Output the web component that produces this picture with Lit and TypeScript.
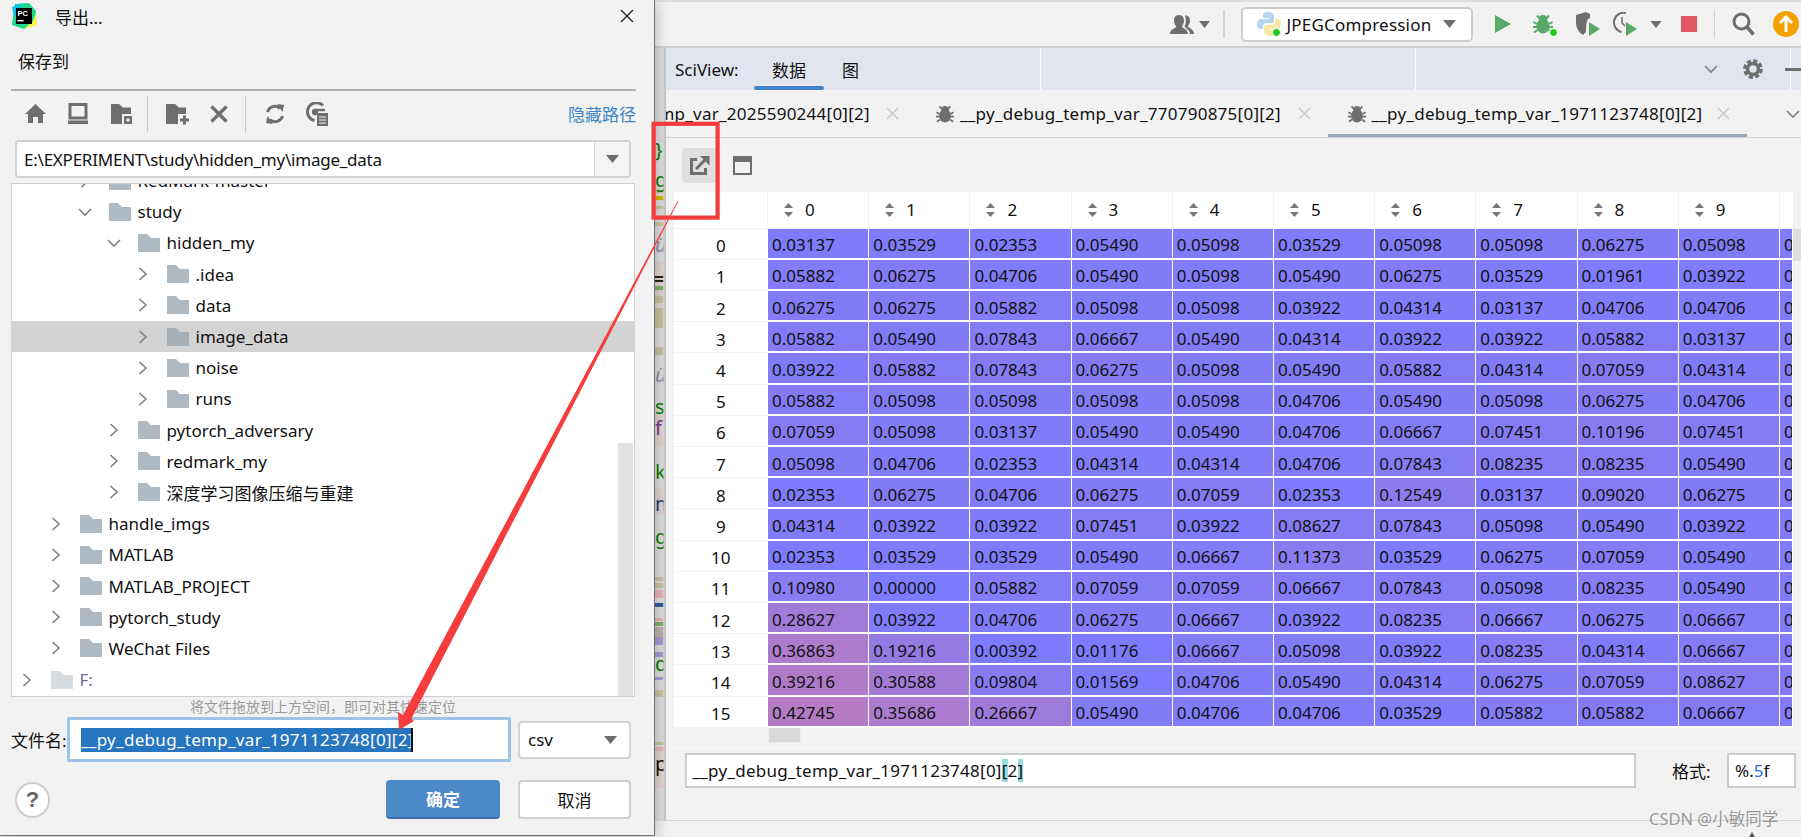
import { LitElement, html, css, svg } from "lit";
import { customElement } from "lit/decorators.js";

const TABLE: string[][] = [
"0.03137 0.03529 0.02353 0.05490 0.05098 0.03529 0.05098 0.05098 0.06275 0.05098",
"0.05882 0.06275 0.04706 0.05490 0.05098 0.05490 0.06275 0.03529 0.01961 0.03922",
"0.06275 0.06275 0.05882 0.05098 0.05098 0.03922 0.04314 0.03137 0.04706 0.04706",
"0.05882 0.05490 0.07843 0.06667 0.05490 0.04314 0.03922 0.03922 0.05882 0.03137",
"0.03922 0.05882 0.07843 0.06275 0.05098 0.05490 0.05882 0.04314 0.07059 0.04314",
"0.05882 0.05098 0.05098 0.05098 0.05098 0.04706 0.05490 0.05098 0.06275 0.04706",
"0.07059 0.05098 0.03137 0.05490 0.05490 0.04706 0.06667 0.07451 0.10196 0.07451",
"0.05098 0.04706 0.02353 0.04314 0.04314 0.04706 0.07843 0.08235 0.08235 0.05490",
"0.02353 0.06275 0.04706 0.06275 0.07059 0.02353 0.12549 0.03137 0.09020 0.06275",
"0.04314 0.03922 0.03922 0.07451 0.03922 0.08627 0.07843 0.05098 0.05490 0.03922",
"0.02353 0.03529 0.03529 0.05490 0.06667 0.11373 0.03529 0.06275 0.07059 0.05490",
"0.10980 0.00000 0.05882 0.07059 0.07059 0.06667 0.07843 0.05098 0.08235 0.05490",
"0.28627 0.03922 0.04706 0.06275 0.06667 0.03922 0.08235 0.06667 0.06275 0.06667",
"0.36863 0.19216 0.00392 0.01176 0.06667 0.05098 0.03922 0.08235 0.04314 0.06667",
"0.39216 0.30588 0.09804 0.01569 0.04706 0.05490 0.04314 0.06275 0.07059 0.08627",
"0.42745 0.35686 0.26667 0.05490 0.04706 0.04706 0.03529 0.05882 0.05882 0.06667",
].map((r) => r.split(" "));

const TREE: { name: string; level: number; open?: boolean; selected?: boolean; pale?: boolean }[] = [
  { name: "RedMark-master", level: 2 },
  { name: "study", level: 2, open: true },
  { name: "hidden_my", level: 3, open: true },
  { name: ".idea", level: 4 },
  { name: "data", level: 4 },
  { name: "image_data", level: 4, selected: true },
  { name: "noise", level: 4 },
  { name: "runs", level: 4 },
  { name: "pytorch_adversary", level: 3 },
  { name: "redmark_my", level: 3 },
  { name: "深度学习图像压缩与重建", level: 3 },
  { name: "handle_imgs", level: 1 },
  { name: "MATLAB", level: 1 },
  { name: "MATLAB_PROJECT", level: 1 },
  { name: "pytorch_study", level: 1 },
  { name: "WeChat Files", level: 1 },
  { name: "F:", level: 0, pale: true },
];

const STRIPES: [number, number, string][] = [
  [190, 193, "#c9c2a0"], [196, 200, "#d8b800"], [206, 209, "#c9c2a0"], [222, 226, "#c9c2a0"],
  [261, 320, "#e0d3d0"], [276, 278, "#222"], [280, 282, "#222"], [286, 290, "#7fb069"], [296, 303, "#c9c2a0"],
  [308, 328, "#c9c2a0"], [347, 355, "#c9c2a0"], [413, 447, "#e0d3d0"], [488, 515, "#e0d3d0"],
  [577, 581, "#c9c2a0"], [583, 588, "#c9c2a0"], [590, 598, "#e8b4b4"], [603, 607, "#2f5f9f"], [618, 621, "#e8b4b4"],
  [622, 626, "#7fb069"], [627, 637, "#c0b4ae"], [637, 645, "#a99ad8"], [652, 657, "#a99ad8"], [677, 680, "#a99ad8"],
  [690, 697, "#c9c2a0"], [742, 745, "#c9c2a0"], [747, 751, "#e8b4b4"], [751, 788, "#e0d3d0"],
];

const GLYPHS: [string, number, string, string?][] = [
  ["}", 157, "#0a7d0a"], ["g", 187, "#0a7d0a"], ["ü", 252, "#8a94a8", "italic"], ["ü", 382, "#8a94a8", "italic"],
  ["s", 414, "#0a7d0a"], ["f", 435, "#7a3a8a"], ["k", 479, "#0a7d0a"], ["m", 511, "#1f3f7a"], ["g", 544, "#0a7d0a"],
  ["d", 671, "#0a7d0a"], ["p", 771, "#111"],
];

const tri = (w = 13, h = 8, c = "#6e6e6e") => html`<svg class="ic" width=${w} height=${h} viewBox="0 0 13 8"><path d="M0 0H13L6.5 8Z" fill=${c}/></svg>`;
const folder = (c: string) => html`<svg class="ic" width="22" height="18" viewBox="0 0 22 18"><path d="M0 0H9L13 4H22V18H0Z" fill=${c}/></svg>`;
const chevR = html`<svg class="ic" width="16" height="14" viewBox="0 0 16 14"><path d="M4.5 1L11 7L4.5 13" fill="none" stroke="#808080" stroke-width="1.6"/></svg>`;
const chevD = html`<svg class="ic" width="16" height="14" viewBox="0 0 16 14"><path d="M2 4L8 10L14 4" fill="none" stroke="#808080" stroke-width="1.6"/></svg>`;
const closeX = (s: number, c: string, w = 1.5) => html`<svg class="ic" width=${s} height=${s} viewBox="0 0 14 14"><path d="M1 1L13 13M13 1L1 13" fill="none" stroke=${c} stroke-width=${w}/></svg>`;
const bug = (c: string, s = 20) => html`<svg class="ic" width=${s} height=${s} viewBox="0 0 20 20"><g fill=${c}><ellipse cx="10" cy="12" rx="6.6" ry="7.5"/><circle cx="10" cy="5" r="4"/></g><path d="M4 1.5L7 5M16 1.5L13 5M0.5 8L4 10M19.5 8L16 10M0 13H4M20 13H16M1 18.5L4.5 16M19 18.5L15.5 16" stroke=${c} stroke-width="2" fill="none"/></svg>`;
const sortIc = html`<svg class="ic" width="9" height="14" viewBox="0 0 9 14"><path d="M4.5 0L9 5H0ZM4.5 14L0 9H9Z" fill="#777"/></svg>`;

@customElement("app-root")
export class AppRoot extends LitElement {
  static styles = css`
    :host { display: block; width: 1801px; height: 837px; position: relative; overflow: hidden; background: #f2f2f2;
      font-family: "Noto Sans", "Noto Sans CJK SC", sans-serif; font-size: 17px; color: #111; }
    * { box-sizing: border-box; }
    .ic { display: block; flex: none; }
    .app { display: flex; width: 1801px; height: 837px; }

    .dialog { width: 655px; height: 836px; flex: none; background: #f2f2f2; border-right: 1.5px solid #707070; border-bottom: 1.5px solid #707070;
      box-shadow: 2px 2px 12px rgba(0,0,0,.22); position: relative; z-index: 2; display: flex; flex-direction: column; }
    .title { height: 32px; display: flex; align-items: center; padding: 0 20px 0 11px; }
    .title .name { margin-left: 18px; flex: 1; }
    .save { height: 57px; padding: 10px 0 0 18px; line-height: 40px; }
    .hr { height: 2px; background: #b0b0b0; margin: 0 18px 0 11px; flex: none; }
    .tools { height: 49px; display: flex; align-items: center; padding: 0 18px 4px 23px; flex: none; }
    .tools .btn { width: 24px; height: 24px; display: flex; align-items: center; justify-content: center; }
    .g19 { margin-left: 19px; } .g18 { margin-left: 18px; } .g17 { margin-left: 17px; } .g21 { margin-left: 21px; } .g12 { margin-left: 12px; }
    .vsep { width: 1px; height: 36px; background: #c8c8c8; margin-left: 14px; }
    .hide { margin-left: auto; color: #3d85c6; white-space: nowrap; }
    .combo { flex: none; height: 38px; margin: 0 23px 0 15px; border: 2px solid #d0d0d0; border-radius: 4px; background: #fff; display: flex; align-items: center; }
    .combo .val { flex: 1; padding-left: 7px; white-space: nowrap; letter-spacing: -0.23px; }
    .combo .drop { width: 35px; height: 100%; border-left: 1px solid #d8d8d8; background: #f4f4f4; display: flex; align-items: center; justify-content: center; }
    .tree { flex: none; height: 514px; margin: 5px 19px 0 11px; border: 1.5px solid #d0d0d0; background: #fff; overflow: hidden; position: relative; }
    .rows { margin-top: -19px; display: flex; flex-direction: column; }
    .row { height: 31.2px; flex: none; display: flex; align-items: center; white-space: nowrap; }
    .row.sel { background: #d3d3d3; }
    .row .fold { margin-left: 16px; margin-right: 6.5px; }
    .row.pale .t { color: #6a6aa8; }
    .thumb { position: absolute; right: 1px; top: 259px; bottom: 0; width: 15px; background: #e2e2e2; }
    .hint { height: 20px; flex: none; margin: 0 19px 0 11px; text-align: center; font-size: 14px; line-height: 20px; color: #9a9a9a; }
    .fileRow { display: flex; align-items: center; height: 45px; flex: none; padding-left: 11px; }
    .fileRow .lbl { width: 56px; flex: none; white-space: nowrap; }
    .fn { width: 444px; height: 45px; flex: none; border: 3px solid #9cc3ea; background: #fff; padding-left: 11px; display: flex; align-items: center; border-radius: 2px; }
    .seltext { height: 24px; line-height: 23px; background: #2675bf; color: #fff; border-right: 2px solid #111; white-space: nowrap; width: 332px; flex: none; overflow: hidden; letter-spacing: 0.3px; }
    .csv { width: 113px; height: 38px; margin-left: 7px; flex: none; border: 2px solid #d4d4d4; border-radius: 4px; background: #fff; display: flex; align-items: center; justify-content: space-between; padding: 0 12px 0 8px; }
    .btnRow { display: flex; align-items: center; height: 39px; margin-top: 18px; flex: none; padding-left: 15px; }
    .help { width: 35px; height: 36px; border-radius: 50%; border: 2px solid #cfcfcf; background: #fff; color: #666; font-weight: 700; font-size: 22px; display: flex; align-items: center; justify-content: center; font-family: "Liberation Sans", sans-serif; }
    .ok { width: 114px; height: 39px; margin-left: auto; border-radius: 4px; background: #4d88c9; border-bottom: 2px solid #3b70ad; color: #fff; font-weight: 700; display: flex; align-items: center; justify-content: center; }
    .cancel { width: 113px; height: 39px; margin: 0 23px 0 18px; border-radius: 4px; border: 2px solid #d0d0d0; background: #fff; display: flex; align-items: center; justify-content: center; }

    .ide { flex: 1; min-width: 0; display: flex; flex-direction: column; height: 837px; }
    .topbar { height: 48px; flex: none; background: #f2f2f2; border-top: 2px solid #dcdcdc; border-bottom: 2px solid #cfcfcf; display: flex; align-items: center; }
    .tsep { width: 1.5px; height: 28px; background: #d4d4d4; flex: none; }
    .run { width: 232px; height: 35px; flex: none; background: #fff; border: 2px solid #cdcdcd; border-radius: 5px; display: flex; align-items: center; padding-left: 14px; }
    .run .cfg { margin-left: 6px; flex: 1; white-space: nowrap; letter-spacing: 0.2px; }
    .run .ic:last-child { margin-right: 15px; }
    .m516 { margin-left: 515px; } .m5 { margin-left: 5px; } .m13 { margin-left: 13px; } .m16 { margin-left: 16px; } .m23 { margin-left: 23px; }
    .m22 { margin-left: 22px; } .m19 { margin-left: 19px; } .m12 { margin-left: 12px; } .m17 { margin-left: 17px; } .m18 { margin-left: 18px; }
    .dotwrap { position: relative; display: block; }
    .dot { position: absolute; right: -5px; bottom: -3px; }

    .body { flex: 1; min-height: 0; display: flex; }
    .gutter { width: 11px; height: 773px; flex: none; display: block; }
    .main { flex: 1; min-width: 0; height: 773px; display: flex; flex-direction: column; background: #f2f2f2; }
    .sci { height: 42px; flex: none; background: #e1e5ed; display: flex; position: relative; }
    .sec { width: 375px; flex: none; border-right: 1px solid #fff; display: flex; align-items: center; }
    .sec.first { padding-left: 9px; width: 375px; }
    .sec.last { justify-content: flex-end; padding-right: 27px; }
    .slabel { width: 79px; flex: none; white-space: nowrap; }
    .stab { height: 42px; padding: 0 18px; display: flex; align-items: center; position: relative; }
    .stab.on::after { content: ""; position: absolute; left: 0; right: 0; bottom: 0; height: 4px; background: #4083c9; border-radius: 3px; }
    .gear { margin-left: 24px; }
    .minus { position: absolute; right: 0; top: 20px; width: 16px; height: 3px; background: #6e6e6e; }
    .tabs { height: 48px; flex: none; display: flex; border-bottom: 1.5px solid #d4d4d4; overflow: hidden; position: relative; }
    .tab { flex: none; display: flex; align-items: center; padding: 0 17px 0 20px; height: 100%; position: relative; white-space: nowrap; }
    .tab.cut { margin-left: -171px; width: 421px; }
    .tab.wide { width: 411.5px; }
    .tab.last { width: 419.5px; }
    .tab.on::after { content: ""; position: absolute; left: 0; right: 0; bottom: 0; height: 3px; background: #9aa7b8; }
    .tab .t { margin-left: 6px; flex: 1; letter-spacing: 0.25px; }
    .tab .blank { width: 18px; flex: none; }
    .more { position: absolute; right: 0; top: 17px; }
    .tool { height: 54px; flex: none; display: flex; align-items: center; padding-left: 16px; }
    .ibtn { width: 35px; height: 35px; background: #dfdfdf; border-radius: 4px; display: flex; align-items: center; justify-content: center; }
    .tool .ic.win { margin-left: 16px; }
    .gridwrap { height: 536px; flex: none; display: flex; margin-left: 7.5px; }
    .grid { width: 1119.5px; height: 536px; flex: none; background: #fff; display: grid; grid-template-columns: 94.5px repeat(10, 101.2px) 13px; grid-template-rows: 36.7px repeat(16, 31.2px); overflow: hidden; }
    .h { display: flex; align-items: center; padding-left: 16px; border-right: 1px solid #f1f1f1; border-bottom: 1px solid #f1f1f1; }
    .h .ic { margin-right: 11px; }
    .h .d { padding-left: 1px; }
    .idx { display: flex; align-items: center; justify-content: center; border-bottom: 1px solid #f3f3f3; padding-top: 4px; }
    .c { border-right: 1.5px solid #fff; border-bottom: 2px solid #fff; padding: 3px 0 0 4px; display: flex; align-items: center; overflow: hidden; white-space: nowrap; }
    .vthumb { width: 9px; height: 32px; margin-top: 37px; background: #dedede; flex: none; }
    .under { height: 20px; flex: none; background: #f3f3f3; padding-left: 102px; }
    .hthumb { width: 33px; height: 15px; background: #d9d9d9; border: 1px solid #ececec; border-top: 0; }
    .form { flex: 1; background: #f2f2f2; border-top: 1px solid #f8f8f8; border-bottom: 1.5px solid #d6d6d6; display: flex; padding: 4px 0 0 19px; }
    .finput { width: 951px; height: 35px; border: 2px solid #cdcdcd; background: #fff; display: flex; align-items: center; padding-left: 5.5px; white-space: nowrap; flex: none; letter-spacing: 0.25px; }
    .brk { background: #99dde0; display: inline-block; height: 23px; line-height: 23px; }
    .fmtl { width: 91px; flex: none; padding-left: 36px; height: 35px; display: flex; align-items: center; white-space: nowrap; }
    .fmt { width: 69px; height: 35px; border: 2px solid #cdcdcd; background: #fff; padding-left: 6px; display: flex; align-items: center; flex: none; }
    .blue { color: #2470f0; }
    .foot { height: 16px; flex: none; background: #f2f2f2; }
    .wm { position: absolute; left: 1649px; top: 806px; height: 26px; line-height: 26px; white-space: nowrap; color: rgba(90,90,90,.6); font-size: 16.5px; }
    .tip { position: absolute; left: 1749px; top: 832px; }
    .overlay { position: absolute; left: 0; top: 0; z-index: 5; pointer-events: none; display: block; }
  `;

  color(v: number) {
    return `rgb(${Math.round(123 + 132 * v)},123,${Math.round(255 - 138 * v)})`;
  }

  renderGutter() {
    return html`<svg class="gutter" viewBox="0 0 11 773" width="11" height="773">
      <defs><clipPath id="cg"><rect x="0" y="0" width="8.5" height="773"/></clipPath></defs>
      <rect x="0" y="0" width="8.5" height="773" fill="#dedede"/>
      <rect x="8.5" y="0" width="2.5" height="773" fill="#c8c8c8"/>
      <g clip-path="url(#cg)">
        ${STRIPES.map(([a, b, c]) => svg`<rect x="0" y=${a - 48} width="8.5" height=${b - a} fill=${c}/>`)}
        ${GLYPHS.map(([t, y, c, st]) => svg`<text x="0" y=${y - 48} fill=${c} font-size="20" font-style=${st ?? "normal"} font-family="Noto Sans, sans-serif">${t}</text>`)}
      </g>
    </svg>`;
  }

  renderDialogTools() {
    const g = "#6e6e6e";
    return html`<div class="tools">
      <div class="btn"><svg class="ic" width="21" height="21" viewBox="0 0 21 21"><path d="M10.5 1L21 11H18V20H13V14H8V20H3V11H0Z" fill=${g}/></svg></div>
      <div class="btn g19"><svg class="ic" width="20" height="21" viewBox="0 0 20 21"><path d="M2 1.5H18V15H2Z" fill="none" stroke=${g} stroke-width="3"/><rect x="0" y="17.5" width="20" height="3.5" fill=${g}/></svg></div>
      <div class="btn g19"><svg class="ic" width="21" height="21" viewBox="0 0 21 21"><path d="M0 1H8L12 4.5H20V11H11V21H0Z" fill=${g}/><rect x="13" y="13" width="8" height="8" fill=${g}/><rect x="15.5" y="15.5" width="3" height="3" fill="#f2f2f2"/></svg></div>
      <div class="vsep"></div>
      <div class="btn g17"><svg class="ic" width="23" height="22" viewBox="0 0 23 22"><path d="M0 1H9L13 4.5H20V11H12V21H0Z" fill=${g}/><path d="M14 17H23M18.5 12.5V21.5" stroke=${g} stroke-width="3"/></svg></div>
      <div class="btn g18"><svg class="ic" width="18" height="18" viewBox="0 0 18 18"><path d="M1.5 1.5L16.5 16.5M16.5 1.5L1.5 16.5" stroke=${g} stroke-width="3.2"/></svg></div>
      <div class="vsep g12"></div>
      <div class="btn g17"><svg class="ic" width="20" height="22" viewBox="0 0 20 22"><path d="M2.5 9A7.5 7.5 0 0 1 15 5.5M17.5 13A7.5 7.5 0 0 1 5 16.5" fill="none" stroke=${g} stroke-width="3"/><path d="M12 1L19 2L17.5 9ZM8 21L1 20L2.5 13Z" fill=${g}/></svg></div>
      <div class="btn g18"><svg class="ic" width="24" height="24" viewBox="0 0 24 24"><path d="M18 3.5A9 9 0 1 0 9.5 18.5" fill="none" stroke=${g} stroke-width="3"/><circle cx="10" cy="10" r="3.2" fill=${g}/><path d="M10 8H20" stroke=${g} stroke-width="2.5"/><rect x="12" y="11" width="11" height="13" fill=${g}/><path d="M14 15H21M14 18H21M14 21H21" stroke="#f2f2f2" stroke-width="1.2"/></svg></div>
      <div class="hide">隐藏路径</div>
    </div>`;
  }

  renderDialog() {
    return html`<div class="dialog">
      <div class="title">
        <svg class="ic" width="26" height="26" viewBox="0 0 26 26">
          <path d="M4 1L18 0L25 8L24 22L13 26L1 22Z" fill="#21d789"/>
          <path d="M1 4L12 0L3 14Z" fill="#07c3f2"/><path d="M25 10L26 22L13 26L22 18Z" fill="#fcf84a"/>
          <rect x="5" y="5" width="16" height="16" fill="#000"/>
          <text x="6.5" y="13" font-size="7.5" font-weight="700" fill="#fff" font-family="Liberation Sans, sans-serif">PC</text>
          <rect x="6.5" y="17" width="6" height="1.4" fill="#fff"/>
        </svg>
        <div class="name">导出...</div>
        ${closeX(14, "#222", 1.4)}
      </div>
      <div class="save">保存到</div>
      <div class="hr"></div>
      ${this.renderDialogTools()}
      <div class="combo"><div class="val">E:\\EXPERIMENT\\study\\hidden_my\\image_data</div><div class="drop">${tri()}</div></div>
      <div class="tree">
        <div class="rows">
          ${TREE.map((r) => html`<div class="row ${r.selected ? "sel" : ""} ${r.pale ? "pale" : ""}" style="padding-left:${7 + 29 * r.level}px">
            ${r.open ? chevD : chevR}
            <span class="fold">${folder(r.pale ? "#d8dde1" : r.selected ? "#a5afb7" : "#afb9c1")}</span>
            <span class="t">${r.name}</span>
          </div>`)}
        </div>
        <div class="thumb"></div>
      </div>
      <div class="hint">将文件拖放到上方空间，即可对其快速定位</div>
      <div class="fileRow">
        <div class="lbl">文件名:</div>
        <div class="fn"><div class="seltext">__py_debug_temp_var_1971123748[0][2]</div></div>
        <div class="csv"><span>csv</span>${tri()}</div>
      </div>
      <div class="btnRow">
        <div class="help">?</div>
        <div class="ok">确定</div>
        <div class="cancel">取消</div>
      </div>
    </div>`;
  }

  renderTop() {
    const g = "#6e6e6e", gr = "#59a869";
    return html`<div class="topbar">
      <svg class="ic m516" width="24" height="20" viewBox="0 0 24 20"><path d="M9 1C13 1 14 4 14 7C14 10 12 11.5 12 13C12 14 18 15 18 20H0C0 15 6 14 6 13C6 11.5 4 10 4 7C4 4 5 1 9 1Z" fill=${g}/><path d="M15 1.5C18 1 20 3.5 20 7C20 10 18 11 18 12.5C18 13.5 24 15 24 20H20C20 16 15 13.5 14.5 12.5C16 10 16.5 5 15 1.5Z" fill=${g}/></svg>
      <span class="m5">${tri(11, 7)}</span>
      <div class="tsep m13"></div>
      <div class="run m16">
        <svg class="ic" width="24" height="26" viewBox="0 0 24 26">
          <path d="M11 1C6 1 6 3 6 5V7H12V8H4C1 8 0 10 0 13S1 18 4 18H6V15C6 13 8 12 10 12H15C16.5 12 17 11 17 10V5C17 3 15 1 11 1Z" fill="#b5d6ee"/>
          <path d="M13 25C18 25 18 23 18 21V19H12V18H20C23 18 24 16 24 13S23 8 20 8H18V11C18 13 16 14 14 14H9C7.5 14 7 15 7 16V21C7 23 9 25 13 25Z" fill="#f6e8a6"/>
          <circle cx="19.5" cy="21.5" r="4" fill="#1ecb1e" stroke="#fff" stroke-width="1"/>
        </svg>
        <span class="cfg">JPEGCompression</span>
        ${tri()}
      </div>
      <svg class="ic m22" width="16" height="18" viewBox="0 0 16 18"><path d="M0 0L16 9L0 18Z" fill=${gr}/></svg>
      <span class="m22 dotwrap">${bug(gr, 20)}<svg class="ic dot" width="9" height="9" viewBox="0 0 9 9"><circle cx="4.5" cy="4.5" r="4" fill="#1ecb1e" stroke="#fff"/></svg></span>
      <svg class="ic m23" width="24" height="24" viewBox="0 0 24 24"><path d="M0 3L10 0L14 2V6C10 6 10 16 10 20L7 23C2 20 0 15 0 10Z" fill=${g}/><path d="M13 10L24 17L13 24Z" fill=${gr}/></svg>
      <svg class="ic m12" width="25" height="25" viewBox="0 0 25 25"><path d="M14 1A9.5 9.5 0 1 0 9.5 20" fill="none" stroke=${g} stroke-width="2"/><path d="M10 5V11L13 14" fill="none" stroke=${g} stroke-width="1.6"/><path d="M14 10L25 17L14 24Z" fill=${gr}/></svg>
      <span class="m13">${tri(12, 7)}</span>
      <svg class="ic m19" width="16" height="16" viewBox="0 0 16 16"><rect width="16" height="16" fill="#e05a66"/></svg>
      <div class="tsep m17"></div>
      <svg class="ic m17" width="23" height="24" viewBox="0 0 23 24"><circle cx="9.5" cy="9.5" r="7.5" fill="none" stroke=${g} stroke-width="3"/><path d="M15 15L21.5 22.5" stroke=${g} stroke-width="3.5"/></svg>
      <svg class="ic m18" width="26" height="26" viewBox="0 0 26 26"><circle cx="13" cy="13" r="13" fill="#f2a100"/><path d="M13 21V7M7 12L13 6L19 12" fill="none" stroke="#fff" stroke-width="3"/></svg>
    </div>`;
  }

  renderSci() {
    const g = "#6e6e6e";
    return html`<div class="sci">
      <div class="sec first">
        <div class="slabel">SciView:</div>
        <div class="stab on">数据</div>
        <div class="stab">图</div>
      </div>
      <div class="sec"></div>
      <div class="sec last">
        ${chevD}
        <svg class="ic gear" width="20" height="20" viewBox="0 0 20 20"><circle cx="10" cy="10" r="5.5" fill="none" stroke=${g} stroke-width="3.6"/><circle cx="10" cy="10" r="8.4" fill="none" stroke=${g} stroke-width="3" stroke-dasharray="4.2 2.4"/></svg>
      </div>
      <div class="minus"></div>
    </div>`;
  }

  renderTabs() {
    const x = html`<span>${closeX(13, "#c4c8cc", 1.5)}</span>`;
    return html`<div class="tabs">
      <div class="tab cut"><span class="blank"></span><span class="t">__py_debug_temp_var_2025590244[0][2]</span>${x}</div>
      <div class="tab wide">${bug("#6e6e6e", 18)}<span class="t">__py_debug_temp_var_770790875[0][2]</span>${x}</div>
      <div class="tab last on">${bug("#6e6e6e", 18)}<span class="t">__py_debug_temp_var_1971123748[0][2]</span>${x}</div>
      <span class="more">${chevD}</span>
    </div>`;
  }

  renderTable() {
    return html`<div class="gridwrap">
      <div class="grid">
        <div class="h"></div>
        ${[0, 1, 2, 3, 4, 5, 6, 7, 8, 9].map((i) => html`<div class="h">${sortIc}<span class="d">${i}</span></div>`)}
        <div class="h"></div>
        ${TABLE.map((row, i) => html`
          <div class="idx">${i}</div>
          ${row.map((v) => html`<div class="c" style="background:${this.color(parseFloat(v))}">${v}</div>`)}
          <div class="c" style="background:${this.color(0.05)}">0.05098</div>
        `)}
      </div>
      <div class="vthumb"></div>
    </div>`;
  }

  render() {
    return html`<div class="app">
      ${this.renderDialog()}
      <div class="ide">
        ${this.renderTop()}
        <div class="body">
          ${this.renderGutter()}
          <div class="main">
            ${this.renderSci()}
            ${this.renderTabs()}
            <div class="tool">
              <div class="ibtn"><svg class="ic" width="20" height="20" viewBox="0 0 20 20"><path d="M7 4.5H1.5V18.5H15.5V13" fill="none" stroke="#6e6e6e" stroke-width="3"/><path d="M6 14L17 3" stroke="#6e6e6e" stroke-width="3"/><path d="M10 1H19.5V10.5Z" fill="#6e6e6e"/></svg></div>
              <svg class="ic win" width="19" height="19" viewBox="0 0 19 19"><rect x="1" y="1" width="17" height="17" fill="none" stroke="#6e6e6e" stroke-width="2"/><rect x="1" y="1" width="17" height="5" fill="#6e6e6e"/></svg>
            </div>
            ${this.renderTable()}
            <div class="under"><div class="hthumb"></div></div>
            <div class="form">
              <div class="finput"><span>__py_debug_temp_var_1971123748[0]<span class="brk">[</span>2<span class="brk">]</span></span></div>
              <div class="fmtl">格式:</div>
              <div class="fmt"><span>%.<span class="blue">5</span>f</span></div>
            </div>
          </div>
        </div>
        <div class="foot"></div>
      </div>
    </div>
    <div class="wm">CSDN @小敏同学</div>
    <svg class="tip" width="6" height="5" viewBox="0 0 6 5"><path d="M3 0L6 5H0Z" fill="#555"/></svg>
    <svg class="overlay" width="1801" height="837" viewBox="0 0 1801 837">
      <rect x="653.6" y="123.8" width="64" height="93.8" fill="none" stroke="#f23c3c" stroke-width="4.2"/>
      <path d="M678.5 201L411.5 718.5L414 721L399 730L398 712L403 715L677.6 201Z" fill="#f53d3d"/>
    </svg>`;
  }
}
